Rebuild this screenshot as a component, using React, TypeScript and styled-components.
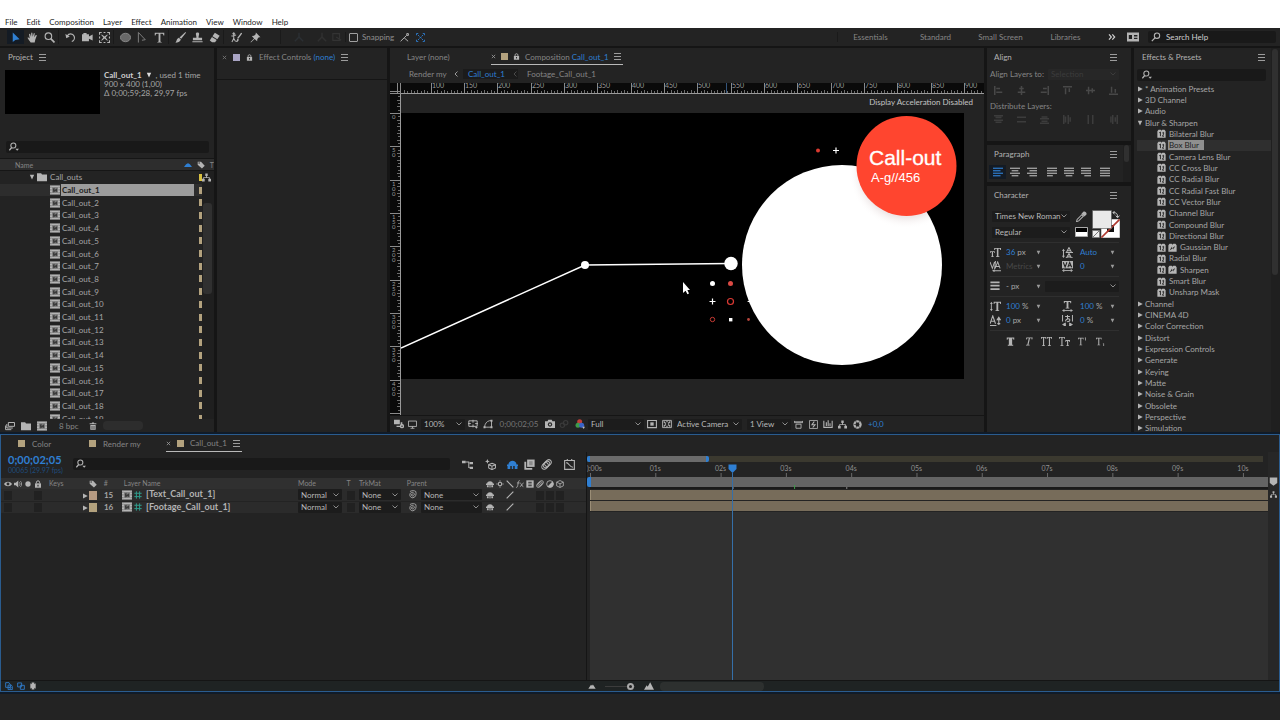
import React from "react";
import styled, { createGlobalStyle, css } from "styled-components";

const c = {
  bg: "#232323",
  well: "#191919",
  gap: "#151515",
  line: "#161616",
  head: "#2d2d2d",
  text: "#a6a6a6",
  bright: "#cfcfcf",
  dim: "#858585",
  off: "#484848",
  icon: "#b4b4b4",
  blue: "#2f7fd2",
  tan: "#b3a27e",
};

const Global = createGlobalStyle`
  * { box-sizing: border-box; }
  body { margin: 0; background: ${c.bg}; }
  body, button, input, select, table { font: 8px/10px Lato, "Noto Sans", sans-serif; color: ${c.text}; }
  button, input, select { margin: 0; padding: 0; border: 0; background: none; outline: 0; }
  ul { list-style: none; margin: 0; padding: 0; }
  h2, p { margin: 0; font: inherit; }
  a { color: inherit; text-decoration: none; }
  svg { display: block; flex: none; }
`;

/* ---------- icons, drawn on a 12 unit grid ---------- */

const glyphs: Record<string, React.ReactNode> = {
  arrow: <path d="M3 0.5V11L5.8 8.6L10.5 8Z" fill="currentColor" />,
  hand: <path d="M4 11.5C3 9.5 1 8 0.6 6.4C1.2 5.7 2.2 6.2 3 7.2L2.2 2.6C2.6 1.7 3.4 1.9 3.6 2.8L4.4 5.4L4.6 1.2C5 .4 5.8 .5 5.9 1.3L6.2 5.2L7.3 1.6C7.8 .9 8.6 1.2 8.4 2.1L7.8 5.8L9.6 3.4C10.3 3 10.9 3.5 10.5 4.3L9 8.5L8.4 11.5Z" fill="currentColor" />,
  zoom: <g fill="none" stroke="currentColor"><circle cx="4.8" cy="4.6" r="3.6" strokeWidth="1.2" /><path d="M7.4 7.3L11.4 11.4" strokeWidth="1.8" /></g>,
  rotate: <g><path d="M2.4 4.4C4 1.4 8.4 1.2 10 4.6C11 7.2 9.4 9.6 7.4 10.4" fill="none" stroke="currentColor" strokeWidth="1.3" /><path d="M0.4 2.2L1.4 6.8L5.2 4.8Z" fill="currentColor" /></g>,
  camera: <path d="M0 2.4H7.6V5L11.6 2.8V9.4L7.6 7.4V10H0ZM1.5 1H5V2.4H1.5Z" fill="currentColor" />,
  pan: <g fill="currentColor"><path d="M0 0H3V1.2H1.2V3H0ZM9 0H12V3H10.8V1.2H9ZM0 9H1.2V10.8H3V12H0ZM10.8 9H12V12H9V10.8H10.8Z" /><path d="M5 0H7V1.2H5ZM5 10.8H7V12H5ZM0 5H1.2V7H0ZM10.8 5H12V7H10.8Z" /><path d="M3 2.6L6 5L9 2.6L9.6 3.2L7.2 6L9.6 9L9 9.6L6 7.2L3 9.6L2.4 9L4.8 6L2.4 3.2Z" /></g>,
  ellipse: <ellipse cx="6" cy="6" rx="5.5" ry="4.6" fill="#686868" stroke="#8a8a8a" />,
  pen: <path d="M1.5 0.5V11.5M1.5 0.5L9 8.4L5.4 9" fill="none" stroke="#848484" strokeWidth="1" />,
  type: <path d="M0.8 0.8H11.2V3.8H10.3C10 2.4 9.6 2 8.4 2H7V9.8C7 10.6 7.4 10.8 8.4 10.9V11.5H3.6V10.9C4.6 10.8 5 10.6 5 9.8V2H3.6C2.4 2 2 2.4 1.7 3.8H0.8Z" fill="currentColor" />,
  brush: <path d="M11.4 0L12 .8L6.8 7.4L4.9 6ZM4.2 6.2L6.4 8.2C5.6 11 3 11.6 0.4 11.6C2 10.4 1.6 7 4.2 6.2Z" fill="currentColor" />,
  stamp: <path d="M4.2 2C4.2 0 7.8 0 7.8 2C7.8 3.6 7 4.6 7.2 6.4H11V9H1V6.4H4.8C5 4.6 4.2 3.6 4.2 2ZM0.4 10H11.6V11.2H0.4Z" fill="currentColor" />,
  eraser: <g fill="currentColor"><path d="M6.4 0.8L11.6 4.2L9 8L3.8 4.6Z" /><path d="M3.2 5.4L8.4 8.8L6.6 11.2H3.4L0.8 9.2Z" /></g>,
  roto: <g fill="none" stroke="currentColor"><circle cx="3" cy="1.8" r="1" fill="currentColor" /><path d="M3 3V7M0.4 4.4L5.6 3.4M3 7L1 11M3 7L5 10.4" strokeWidth="1.1" /><path d="M11.6 1.2L7.4 7" strokeWidth="1.5" /><path d="M7.2 7.2C6.4 8 6.8 9.6 5 11C7 11.2 8.6 10 8.4 8.2Z" fill="currentColor" stroke="none" /></g>,
  pin: <path d="M6.4 0.6L11.4 5.6L9.6 5.8L8 7.6L7.8 10L5 7.6L1 11.4L0.6 11L4.4 7L2 4.4L4.4 4.2L6.2 2.4Z" fill="currentColor" />,
  box: <path d="M1 2H9V10H1ZM5 6L11 10" fill="none" stroke="currentColor" strokeWidth="1.4" />,
  axis: <path d="M6 1V6L1 11M6 6L11 11" fill="none" stroke="currentColor" strokeWidth="1.8" />,
  snap: <path d="M0.8 11L5.6 6.4L10.8 11M5.6 6.4L8.8 3.2M9 0.8H11.2V3.2H9Z" fill="none" stroke="currentColor" strokeWidth="1.3" />,
  snapBox: <path d="M0.7 3V0.7H3M9 0.7H11.3V3M11.3 9V11.3H9M3 11.3H0.7V9M2.6 2.6L4.6 4.6M9.4 2.6L7.4 4.6M2.6 9.4L4.6 7.4M9.4 9.4L7.4 7.4M5 6H7" fill="none" stroke="currentColor" strokeWidth="1.2" />,
  more: <path d="M1.5 2L5 6L1.5 10M6.5 2L10 6L6.5 10" fill="none" stroke="currentColor" strokeWidth="1.8" />,
  back: <path d="M9 1L4 6L9 11" fill="none" stroke="currentColor" strokeWidth="2" />,
  workspace: <g><path d="M0 1.5H12V10.5H0Z" fill="currentColor" /><path d="M1.8 4H5V8H1.8ZM7 4H10.4V5.4H7ZM7 6.8H10.4V8H7Z" fill="#232323" /></g>,
  search: <g fill="none" stroke="currentColor"><circle cx="7.2" cy="4.4" r="3.2" strokeWidth="1.3" /><path d="M5 6.8L1 11" strokeWidth="1.5" /></g>,
  searchMenu: <g fill="none" stroke="currentColor"><circle cx="5.2" cy="4.2" r="3" strokeWidth="1.3" /><path d="M3.2 6.6L0.4 10" strokeWidth="1.5" /><path d="M7.6 8H12L9.8 10.4Z" fill="currentColor" stroke="none" /></g>,
  close: <path d="M2 2L10 10M10 2L2 10" stroke="currentColor" strokeWidth="2" />,
  lock: <g><path d="M1.5 5H10.5V11.6H1.5Z" fill="currentColor" /><path d="M3.6 5V3.2C3.6 .6 8.4 .6 8.4 3.2V5" fill="none" stroke="currentColor" strokeWidth="1.5" /><path d="M5.2 7H6.8V9.6H5.2Z" fill="#232323" /></g>,
  tri: <path d="M2 1L11.5 6L2 11Z" fill="currentColor" />,
  triDown: <path d="M1.6 1.5H10.4L6 11Z" fill="currentColor" />,
  sort: <path d="M0 9C2 7 3.6 3.4 6 3.4S10 7 12 9Z" fill="currentColor" />,
  tag: <g><path d="M1 1H6L11.6 7L7.4 11.4L1 5.6Z" fill="currentColor" /><circle cx="3.2" cy="3" r="1" fill="#232323" /></g>,
  folder: <path d="M0 1.5H5L6 3H12V11H0Z" fill="currentColor" />,
  comp: <g><path d="M0 0.5H12V11.5H0Z" fill="#b4b4b4" /><path d="M2.5 2.5H9.5V9.5H2.5Z" fill="#7d7d7d" /><path d="M3.4 4.4L5.4 3.4V6L8.6 4V8.4L6.4 7.6L4 9Z" fill="#3a3a3a" /><path d="M0.6 2H1.6V3.4H0.6ZM0.6 5H1.6V6.6H0.6ZM0.6 8.4H1.6V10H0.6ZM10.4 2H11.4V3.4H10.4ZM10.4 5H11.4V6.6H10.4ZM10.4 8.4H11.4V10H10.4Z" fill="#5a5a5a" /></g>,
  tree: <path d="M4.4 0.6H7.6V4H6.6V5.6H10.4V7.6H12V11.4H8.4V7.6H9.4V6.6H2.6V7.6H3.6V11.4H0V7.6H1.6V5.6H5.4V4H4.4Z" fill="currentColor" />,
  stack: <g fill="none" stroke="currentColor" strokeWidth="1.2"><path d="M4 1.8H11.4V6.4H4Z" /><path d="M2.2 3.6V8.4H9.4M.7 5.4V10.4H7.6" /></g>,
  trash: <path d="M1 2H4.4V0.6H7.6V2H11V3.4H1ZM2 4.4H10V11.8H2ZM4 6V10.4H5V6ZM7 6V10.4H8V6Z" fill="currentColor" fillRule="evenodd" />,
  fx: <g><path d="M0.5 11.5V3L2 1H5L6 2.4L7 1H10L11.5 3V11.5Z" fill="#b5b5b5" /><path d="M3 5L4.6 4V9.6M7 5.4L8.8 4.4V6.8L7.2 9.6H9.4" fill="none" stroke="#2a2a2a" strokeWidth="1.3" /></g>,
  fxPlay: <g><path d="M0.5 11.5V3L2 1H5L6 2.4L7 1H10L11.5 3V11.5Z" fill="#b5b5b5" /><path d="M2 10L5.4 4.6V7L9.6 4L7 9V6.6Z" fill="#2a2a2a" /></g>,
  monitor: <g fill="none" stroke="currentColor" strokeWidth="1.2"><path d="M0.6 1.4H11.4V8.6H0.6Z" /><path d="M3.4 11H8.6M6 8.6V11" /></g>,
  layersMini: <g><path d="M0 1H7V6.4H0ZM8 4V8H3V9.6H10V4Z" fill="currentColor" /><circle cx="9.6" cy="8.6" r="2.6" fill="currentColor" /><circle cx="9.6" cy="8.6" r="0.9" fill="#232323" /></g>,
  safe: <g fill="none" stroke="currentColor" strokeWidth="1.2"><path d="M1 2.2H11V8.8H1ZM6 1V4.4M6 6.6V10M0 5.5H3.4M8.6 5.5H12" /><path d="M8.4 9.6H11.8L10 11.8Z" fill="currentColor" stroke="none" /></g>,
  mask: <g fill="none" stroke="currentColor" strokeWidth="1.1"><path d="M1.8 9.8C2.4 5.6 4.2 2.8 8 2H10.2V9.8Z" /><path d="M0.6 8.6H3V11H0.6ZM9 8.6H11.4V11H9ZM9 0.8H11.4V3.2H9Z" fill="currentColor" stroke="none" /></g>,
  snapshot: <g><path d="M0 2.6H3L4 1H8L9 2.6H12V10.8H0Z" fill="currentColor" /><circle cx="6" cy="6.6" r="2.6" fill="#232323" /><circle cx="6" cy="6.6" r="1.3" fill="currentColor" /></g>,
  show: <g fill="none" stroke="currentColor" strokeWidth="1.4"><circle cx="4" cy="7.6" r="2.6" /><circle cx="8" cy="4.4" r="2.6" /></g>,
  rgb: <g><circle cx="5.6" cy="3.4" r="3" fill="#c33f38" /><circle cx="3.6" cy="7.4" r="3" fill="#3f9a4a" /><circle cx="8" cy="7.4" r="3" fill="#3a63c8" /><path d="M8.6 9.2H12L10.4 12Z" fill="#bbb" /></g>,
  roi: <g><path d="M0.7 1.7H11.3V10.3H0.7Z" fill="none" stroke="currentColor" strokeWidth="1.3" /><path d="M4 4H8V8H4Z" fill="currentColor" /></g>,
  grid: <g fill="none" stroke="currentColor" strokeWidth="1.1"><path d="M0.7 1.7H11.3V10.3H0.7Z" /><path d="M2 9L4.6 6.4M7.4 5.4L10 3M2 3L4.6 5.6M7.4 6.6L10 9M6 2V4M6 8V10" strokeWidth="1.4" /></g>,
  pixelAspect: <g fill="none" stroke="currentColor" strokeWidth="1.2"><path d="M0.4 1.2V3.6H11.6V1.2M0 2.4H12M2.6 5.6H9.4V11H2.6Z" /></g>,
  fast: <g fill="none" stroke="currentColor" strokeWidth="1.1"><path d="M0.7 0.7H11.3V11.3H0.7Z" /><path d="M7 2L4 6.4H8L5 10" strokeWidth="1.5" /></g>,
  chart: <path d="M1 2V10H11V2M4 8.4V4M6.2 8.4V1.6M8.4 8.4V5" fill="none" stroke="currentColor" strokeWidth="1.3" />,
  exposure: <g fill="none" stroke="currentColor"><circle cx="6" cy="6" r="4" strokeWidth="2.6" strokeDasharray="3.4 .8" /><circle cx="6" cy="6" r="5.2" strokeWidth=".8" /></g>,
  flow: <g fill="currentColor"><path d="M0 2H4V4.6H0ZM8.4 3.4H12V5.6H8.4ZM8.4 8.4H12V10.8H8.4Z" /><path d="M4 3.4H7.4V9.4H8.4M7 4.4H8.4" fill="none" stroke="currentColor" strokeWidth="1.1" /></g>,
  draft3d: <g fill="none" stroke="currentColor" strokeWidth="1.1"><path d="M7.6 4.6L11.4 6.2V9.8L7.6 11.6L4 9.8V6.2ZM4 6.2L7.6 7.8L11.4 6.2M7.6 7.8V11.6" /><path d="M2.6 0L3.4 1.8L5.2 2.6L3.4 3.4L2.6 5.2L1.8 3.4L0 2.6L1.8 1.8Z" fill="currentColor" stroke="none" /></g>,
  shy: <g fill="currentColor"><path d="M1.6 5.4C2 0.6 10 0.6 10.4 5.4H12V7.4H0V5.4Z" /><path d="M1.4 8H4V11H1.4ZM5.2 7.4H6.8V11.4H5.2ZM8 8H10.6V11H8Z" /></g>,
  shyOn: <g fill="currentColor"><path d="M1.6 6C2 0.6 10 0.6 10.4 6H12V7.6H0V6Z" /><path d="M0.6 7.6H3.6V10.8H0.6ZM5.2 7.6H6.8V10.8H5.2ZM8.4 7.6H11.4V10.8H8.4Z" /></g>,
  frame: <g><path d="M3.4 0.6H11.6V8.6H3.4Z" fill="currentColor" /><path d="M0.4 3H2.4V9.8H9V11.6H0.4Z" fill="currentColor" /><path d="M5.6 2.4H9.4V6.8H5.6Z" fill="#8a8a8a" /></g>,
  blur: <g fill="none" stroke="currentColor" strokeWidth="1.1"><ellipse cx="7.6" cy="4.4" rx="4" ry="2.9" transform="rotate(-45 7.6 4.4)" /><ellipse cx="6" cy="6" rx="4" ry="2.9" transform="rotate(-45 6 6)" /><ellipse cx="4.4" cy="7.6" rx="4" ry="2.9" transform="rotate(-45 4.4 7.6)" /></g>,
  graph: <g fill="none" stroke="currentColor" strokeWidth="1.2"><path d="M0.7 1.7H11.3V11.3H0.7Z" /><path d="M2.4 4C5.4 4 6 9 9.8 9M3.6 0V2M8.4 0V2" /></g>,
  eye: <g><path d="M0 6C3 1.6 9 1.6 12 6C9 10.4 3 10.4 0 6Z" fill="currentColor" /><circle cx="6" cy="6" r="2.2" fill="#2d2d2d" /></g>,
  audio: <g><path d="M0 4H2.6L6.4 0.8V11.2L2.6 8H0Z" fill="currentColor" /><path d="M8 3.4C9.4 5 9.4 7 8 8.6M9.6 1.6C12 4 12 8 9.6 10.4" fill="none" stroke="currentColor" strokeWidth="1.1" /></g>,
  solo: <circle cx="6" cy="6" r="4" fill="currentColor" />,
  sun: <g><circle cx="6" cy="6" r="2.6" fill="none" stroke="currentColor" strokeWidth="1.6" /><path d="M6 .6V2.4M6 9.6V11.4M.6 6H2.4M9.6 6H11.4" stroke="currentColor" strokeWidth="1.4" /></g>,
  quality: <path d="M1 1L11 11" stroke="currentColor" strokeWidth="1.8" />,
  best: <path d="M1 11L11 1" stroke="currentColor" strokeWidth="1.8" />,
  film: <g><path d="M0.5 0.5H11.5V11.5H0.5Z" fill="currentColor" /><path d="M3.4 2.6H8.6V5.4H3.4ZM3.4 6.8H8.6V9.4H3.4Z" fill="#4a4a4a" /></g>,
  adjust: <g><circle cx="6" cy="6" r="5" fill="none" stroke="currentColor" strokeWidth="1.3" /><path d="M9.6 2.4A5 5 0 0 1 2.4 9.6Z" fill="currentColor" /></g>,
  cube: <path d="M6 0.8L11 3.2V8.8L6 11.2L1 8.8V3.2ZM1 3.2L6 5.8L11 3.2M6 5.8V11.2" fill="none" stroke="currentColor" strokeWidth="1.2" />,
  fxItalic: <path d="M5.6 1C3.4 .6 3.6 3 3 6S2.4 11.6 0.2 11M1.4 4.4H5.4M6.4 4.4C8 4.4 8.4 10 11 10M11.4 4.4C9.4 4.4 8 10 5.8 10" fill="none" stroke="currentColor" strokeWidth="1.2" />,
  whip: <path d="M6.2 6C6.8 5 5 4.4 4.4 6C4 8 7 8.8 8.2 6.8C9.4 4 5.6 2 3.4 4C1.2 6.4 2.8 10.4 6.4 10.4C10 10.2 11.6 5.6 10.4 2M10.4 2C8.6 .6 5 .4 2.6 2" fill="none" stroke="currentColor" strokeWidth="1.1" />,
  hash: <g stroke="#2f9a8a" strokeWidth="1.5"><path d="M3.6 0.5V11.5M8.4 0.5V11.5M0.5 3.4H11.5M0.5 8.4H11.5" /></g>,
  mount: <path d="M0.5 10L4.5 4L6 5.6L7.4 3.6L11.5 10Z" fill="currentColor" />,
  mountBig: <path d="M0 10.5L3.2 5L4.4 6.8L7.4 1.6L12 10.5Z" fill="currentColor" />,
  toggleA: <g fill="none" stroke="currentColor" strokeWidth="1.3"><path d="M1 1H6L8 4V8H1Z" /><path d="M4.6 4.6H9.6L11 7V11.4H4.6Z" /><circle cx="8" cy="8.4" r="1.2" /></g>,
  toggleB: <g fill="none" stroke="currentColor" strokeWidth="1.3"><path d="M1 1.4H7V7.4H1Z" /><path d="M5 5H11V11H5Z" /></g>,
  toggleC: <path d="M4 0.6H8V3.4L10 2V10L8 8.6V11.4H4V8.6L2 10V2L4 3.4Z" fill="currentColor" />,
  dropper: <g fill="currentColor"><path d="M8 0.8C9.8 -.4 12.4 2 11.2 4L9 6L6 3Z" /><path d="M6.4 4L8 5.6L3 10.8L0.6 11.6L1.2 9.2Z" fill="none" stroke="currentColor" strokeWidth="1.1" /></g>,
  tSize: <g fill="currentColor"><path d="M4.6 1H12V3.4H11.2L10.8 2H9.2V10H10.2V11H6.6V10H7.5V2H5.9L5.4 3.4H4.6Z" /><path d="M0 4.6H5.2V6.6H4.6L4.3 5.5H3.3V10.2H4V11H1.4V10.2H2V5.5H.9L.6 6.6H0Z" /></g>,
  leading: <g fill="none" stroke="currentColor" strokeWidth="1.1"><path d="M5 5.4L7.6 .6L10.2 5.4M6 4H9.4M4 6H12M5 11.6L7.6 7L10.2 11.6M6 10.2H9.4M4 12H12M1.6 3V11" /><path d="M0 4.4L1.6 2L3.2 4.4ZM0 9.6L1.6 12L3.2 9.6Z" fill="currentColor" stroke="none" /></g>,
  kern: <g fill="none" stroke="currentColor" strokeWidth="1.1"><path d="M0 1L2.6 8L5 1M5.6 8L8.4 1L11 8M6.6 6H10M6 0L5 9M3 10.6H12" /><path d="M5 9L2.4 10.6L5 12Z" fill="currentColor" stroke="none" /></g>,
  track: <g><path d="M0 0H12V8H0Z" fill="currentColor" /><path d="M1.4 1.4L3.4 6.6L5.4 1.4M6.4 6.8L8.4 1.6L10.6 6.8M7.4 5.2H9.6" fill="none" stroke="#232323" strokeWidth="1.1" /><path d="M1 10.4H11M2.6 9L0.6 10.4L2.6 11.8M9.4 9L11.4 10.4L9.4 11.8" fill="none" stroke="currentColor" /></g>,
  strokeW: <path d="M0.5 1.6H11.5M0.5 5.6H11.5M0.5 9.8H11.5" stroke="currentColor" strokeWidth="2" />,
  vScale: <g fill="currentColor"><path d="M4 0.8H12V3.4H11.2L10.8 2H9V10H10V11H6V10H7V2H5.2L4.8 3.4H4Z" /><path d="M1.5 2.4V9.6" stroke="currentColor" /><path d="M0 3.4L1.5 .8L3 3.4ZM0 8.6L1.5 11.2L3 8.6Z" /></g>,
  hScale: <g fill="currentColor"><path d="M2 0H10V2.4H9.2L8.8 1.2H7V7.4H8V8.2H4V7.4H5V1.2H3.2L2.8 2.4H2Z" /><path d="M1.4 10.4H10.6" stroke="currentColor" /><path d="M2.6 8.8L0 10.4L2.6 12ZM9.4 8.8L12 10.4L9.4 12Z" /></g>,
  shift: <g fill="none" stroke="currentColor" strokeWidth="1.2"><path d="M0 9.6L3 1L6 9.6M1.2 6.8H5M0 11.4H7M9.6 4V11" /><path d="M8 5L9.6 2.4L11.2 5ZM8 9.4H11.2" fill="currentColor" /></g>,
  tsume: <g fill="none" stroke="currentColor" strokeWidth="1.1"><path d="M0.6 0V7M11.4 0V7M3.4 1.6H8.6M6 0V4M4 7C3.4 4.4 8.6 3 8.6 5.6C8.4 7.4 6 7.4 5.4 7" /><path d="M3.6 9L1 10.4L3.6 12ZM8.4 9L11 10.4L8.4 12Z" fill="currentColor" /></g>,
  bold: <path d="M1 0.5H11V3.6H10L9.4 2H8.2V10.2H9.6V11.5H2.4V10.2H3.8V2H2.6L2 3.6H1Z" fill="currentColor" />,
  italic: <path d="M3.2 0.5H11.6L11 3.4H10.2L10 1.6H8L6 10.4H7.6L7.4 11.4H2.6L2.8 10.4H4.4L6.4 1.6H4.4L3.4 3.4H2.6Z" fill="currentColor" />,
  caps: <path d="M0 1H5.6V3.4H5L4.6 2H3.4V10.2H4.4V11H1.2V10.2H2.2V2H1L.6 3.4H0ZM6.4 1H12V3.4H11.4L11 2H9.8V10.2H10.8V11H7.6V10.2H8.6V2H7.4L7 3.4H6.4Z" fill="currentColor" />,
  smallCaps: <path d="M0 1H6.4V3.4H5.8L5.4 2H3.8V10.2H4.8V11H1.6V10.2H2.6V2H1L.6 3.4H0ZM7 4.4H12V6.6H11.4L11 5.4H10V10.2H10.8V11H8V10.2H8.8V5.4H8L7.6 6.6H7Z" fill="currentColor" />,
  superT: <path d="M0 1H7.4V3.4H6.8L6.4 2H4.4V10.2H5.6V11H1.8V10.2H3V2H1L.6 3.4H0ZM9 1L10.4 .4V4.6H9.4V1.6H9Z" fill="currentColor" />,
  subT: <path d="M0 1H7.4V3.4H6.8L6.4 2H4.4V10.2H5.6V11H1.8V10.2H3V2H1L.6 3.4H0ZM9.4 8.6H10.8V12H9.8V9.4H9Z" fill="currentColor" />,
  marker: <path d="M1 0.5H11V8L6 11.5L1 8Z" fill="currentColor" />,
};

const alignBars: Record<string, string> = {
  alignL: "M1 0V12M3 3.4H8M3 8.4H11",
  alignC: "M6 0V12M3 3.4H9M1 8.4H11",
  alignR: "M11 0V12M4 3.4H9M1 8.4H9",
  alignT: "M0 1H12M3.4 3V11M8.4 3V8",
  alignM: "M0 6H12M3.4 1V11M8.4 3V9",
  alignB: "M0 11H12M3.4 1V9M8.4 4V9",
  distT: "M0 1H12M2 3.4H10M0 7H12M2 9.6H10",
  distM: "M0 3H3M9 3H12M3 3H9M0 9H3M9 9H12M3 9H9",
  distB: "M2 2.6H10M0 5H12M2 8.4H10M0 11H12",
  distL: "M1 0V12M3.4 2V10M7 0V12M9.6 3V9",
  distC: "M3 0V12M9 0V12M3 3V9M9 3V9",
  distR: "M2.6 2V10M5 0V12M8.4 3V9M11 0V12",
};

const paraLines: Record<string, [number, number][]> = {
  pLeft: [[0, 12], [0, 9], [0, 12], [0, 9]],
  pCenter: [[0, 12], [2, 10], [0, 12], [2, 10]],
  pRight: [[0, 12], [3, 12], [0, 12], [3, 12]],
  pJustL: [[0, 12], [0, 12], [0, 12], [0, 7]],
  pJustC: [[0, 12], [0, 12], [0, 12], [2, 10]],
  pJustR: [[0, 12], [0, 12], [0, 12], [4, 12]],
  pJust: [[0, 12], [0, 12], [0, 12], [0, 12]],
};

function Icon({ name, size = 10, color = c.icon }: { name: string; size?: number; color?: string }) {
  let body = glyphs[name];
  if (alignBars[name]) body = <path d={alignBars[name]} stroke="currentColor" strokeWidth="2" />;
  if (paraLines[name])
    body = paraLines[name].map(([a, b], i) => (
      <path key={i} d={`M${a} ${1.5 + i * 3}H${b}`} stroke="currentColor" strokeWidth="1.4" />
    ));
  return (
    <svg width={size} height={size} viewBox="0 0 12 12" color={color} aria-hidden="true">
      {body}
    </svg>
  );
}

function MenuIcon() {
  return (
    <svg width="7" height="7" viewBox="0 0 7 7" aria-hidden="true">
      <path d="M0 0.5H7M0 3.5H7M0 6.5H7" stroke="#9c9c9c" />
    </svg>
  );
}

/* ---------- shared parts ---------- */

const Screen = styled.div`
  min-height: 100vh;
  display: flex;
  flex-direction: column;
  padding-bottom: 28px;
  background: ${c.bg};
  overflow: hidden;
`;

const IconButton = styled.button<{ $w?: number; $on?: boolean }>`
  width: ${(p) => p.$w ?? 17}px;
  height: 14px;
  flex: none;
  display: flex;
  align-items: center;
  justify-content: center;
  background: ${(p) => (p.$on ? "#141b24" : "none")};
`;

const Panel = styled.section`
  background: ${c.bg};
  display: flex;
  flex-direction: column;
  min-width: 0;
  min-height: 0;
  overflow: hidden;
`;

const PanelHead = styled.header<{ $pad?: number }>`
  height: 18px;
  flex: none;
  display: flex;
  align-items: center;
  gap: 6px;
  padding: 0 ${(p) => p.$pad ?? 8}px;
  color: ${(p) => (p.$pad ? c.dim : "#b2b2b2")};
`;

const Blue = styled.span`
  color: ${c.blue};
`;

const Swatch = styled.i<{ $c?: string }>`
  width: 7px;
  height: 7px;
  flex: none;
  background: ${(p) => p.$c ?? c.tan};
`;

const SearchBox = styled.label`
  height: 12px;
  flex: none;
  display: flex;
  align-items: center;
  gap: 5px;
  padding: 0 3px;
  background: ${c.well};
  border-radius: 2px;
  input { flex: 1; min-width: 0; height: 12px; }
  input::placeholder { color: ${c.bright}; opacity: 1; }
`;

const SelectWrap = styled.label<{ $w?: number; $dim?: boolean }>`
  display: grid;
  align-items: center;
  width: ${(p) => (p.$w ? p.$w + "px" : "100%")};
  height: 11px;
  flex: none;
  background: ${(p) => (p.$dim ? "#272727" : "#1c1c1c")};
  border-radius: 1px;
  > * { grid-area: 1 / 1; }
  svg { justify-self: end; margin-right: 3px; pointer-events: none; }
  select { appearance: none; width: 100%; height: 11px; padding: 0 3px; color: ${(p) => (p.$dim ? "#3c3c3c" : "#b8b8b8")}; }
`;

function Select({ label, value, w, dim }: { label: string; value: string; w?: number; dim?: boolean }) {
  return (
    <SelectWrap $w={w} $dim={dim}>
      <select aria-label={label} defaultValue={value}>
        <option>{value}</option>
      </select>
      <svg width="6" height="4" viewBox="0 0 6 4" aria-hidden="true">
        <path d="M0.5 0.5L3 3L5.5 0.5" fill="none" stroke={dim ? "#3c3c3c" : "#8c8c8c"} />
      </svg>
    </SelectWrap>
  );
}

/* ---------- menu bar and tool bar ---------- */

const MenuBar = styled.nav`
  height: 28px;
  padding: 17px 0 0 5px;
  display: flex;
  gap: 9px;
  background: #fff;
  color: #1e1e1e;
`;

const ToolBar = styled.div`
  height: 20px;
  display: flex;
  align-items: center;
  padding: 0 4px 0 7px;
  border-bottom: 2px solid ${c.gap};
`;

const ToolGroup = styled.div<{ $ml?: number }>`
  display: flex;
  align-items: center;
  margin-left: ${(p) => p.$ml ?? 0}px;
  & + & { padding-left: 3px; border-left: 1px solid #1a1a1a; }
`;

const Snap = styled.label`
  display: flex;
  align-items: center;
  gap: 4px;
  margin-right: 2px;
  padding-left: 3px;
  border-left: 1px solid #1a1a1a;
  color: #8e8e8e;
  input { appearance: none; width: 9px; height: 9px; border: 1px solid #a0a0a0; border-radius: 1px; }
`;

const Workspaces = styled.div`
  display: flex;
  align-items: center;
  margin-left: auto;
  border-left: 1px solid #1a1a1a;
  button { width: 65px; color: ${c.dim}; }
`;

const HelpSearch = styled(SearchBox)`
  width: 128px;
  margin-left: 8px;
`;

/* ---------- work area ---------- */

const Work = styled.main`
  height: calc(60vh - 48px);
  display: grid;
  grid-template-columns: 214px 170px minmax(0, 1fr) 144px 146px;
  grid-template-rows: minmax(0, 1fr);
  gap: 3px;
  background: ${c.gap};
`;

const Info = styled.div`
  display: flex;
  gap: 4px;
  padding: 4px 5px 27px;
  p { display: flex; align-items: center; gap: 4px; height: 9px; white-space: nowrap; }
  b { color: ${c.bright}; }
`;

const Thumb = styled.div`
  width: 95px;
  height: 44px;
  flex: none;
  background: #000;
`;

const ProjectSearch = styled(SearchBox)`
  margin: 0 5px 5px 6px;
`;

const ListHead = styled.div`
  height: 13px;
  flex: none;
  display: flex;
  align-items: center;
  padding-left: 15px;
  background: ${c.head};
  border: solid ${c.line};
  border-width: 1px 0;
  font-size: 7px;
  color: ${c.dim};
  svg { margin-right: 5px; }
  span { flex: 1; }
`;

const FileArea = styled.div`
  flex: 1;
  min-height: 0;
  display: flex;
  overflow: hidden;
`;

const FileList = styled.ul`
  flex: 1;
  height: 254px;
  display: grid;
  grid-auto-rows: 1fr;
`;

const FileRow = styled.li<{ $on?: boolean; $folder?: boolean }>`
  display: flex;
  align-items: center;
  padding-left: ${(p) => (p.$folder ? 29 : 50)}px;
  background: ${(p) => (p.$on ? "#2d2d2d" : "none")};
  span {
    flex: 1;
    margin: 0 5px 0 ${(p) => (p.$folder ? 3 : 1)}px;
    padding-left: ${(p) => (p.$folder ? 0 : 1)}px;
    ${(p) => p.$on && css`background: #9c9c9c; color: #1c1c1c; font-weight: 700; line-height: 12px;`}
  }
`;

const Tick = styled.i<{ $c?: string }>`
  width: 3px;
  height: 7px;
  background: ${(p) => p.$c ?? c.tan};
`;

const ScrollTrack = styled.div<{ $w: number; $top: number; $h: number }>`
  width: ${(p) => p.$w}px;
  flex: none;
  padding: 0 2px 0 1px;
  background: #1f1f1f;
  svg { margin: 2px 0 0 -1px; }
  &::after { content: ""; display: block; margin-top: ${(p) => p.$top}px; height: ${(p) => p.$h}px; background: #303030; border-radius: 3px; }
`;

const FootBar = styled.footer`
  flex: none;
  height: 13px;
  display: flex;
  align-items: center;
  gap: 6px;
  padding: 0 5px;
  span { padding: 0 5px 0 6px; color: ${c.dim}; }
  i { width: 40px; height: 9px; border-radius: 4px; background: #2d2d2d; }
`;

const SubBar = styled.div`
  height: 14px;
  border-bottom: 1px solid ${c.gap};
`;

const CompTabs = styled.div`
  height: 18px;
  flex: none;
  display: flex;
  align-items: center;
  padding-left: 17px;
  > button { width: 84px; text-align: left; color: ${c.dim}; }
`;

const ActiveTab = styled.div<{ $gap: number }>`
  height: 16px;
  display: flex;
  align-items: center;
  gap: ${(p) => p.$gap}px;
  padding-right: 2px;
  border-bottom: 1px solid #b9b9b9;
  color: ${c.dim};
`;

const Crumbs = styled.nav`
  height: 17px;
  flex: none;
  display: flex;
  align-items: center;
  padding: 0 0 1px 19px;
  color: ${c.dim};
  > a:first-child { width: 44px; }
`;

const Current = styled.div`
  width: 55px;
  display: flex;
  align-items: center;
  justify-content: space-between;
  margin: 0 9px 0 4px;
  padding-left: 5px;
  background: #1b1b1b;
`;

const Viewer = styled.div`
  flex: 1;
  min-height: 0;
  display: grid;
  grid-template: 11px minmax(0, 1fr) / 11px minmax(0, 1fr);
  background: ${c.bg};
  overflow: hidden;
  > svg { background: #0a0a0a; }
`;

const Stage = styled.div`
  min-width: 0;
  overflow: hidden;
  p { height: 19px; line-height: 17px; padding-right: 11px; text-align: right; color: #c4c4c4; }
`;

const CompFoot = styled.footer`
  flex: none;
  height: 17px;
  display: flex;
  align-items: center;
  padding-left: 3px;
  border-top: 1px solid ${c.gap};
  color: ${c.text};
`;

const Code = styled.button`
  width: 46px;
  color: #777;
`;

const Spacer = styled.span<{ $w: number }>`
  width: ${(p) => p.$w}px;
  flex: none;
`;

/* ---------- side panels ---------- */

const Side = styled.div`
  display: flex;
  flex-direction: column;
  gap: 4px;
  min-height: 0;
`;

const Body = styled.div`
  padding: 0 12px 0 3px;
`;

const AlignLine = styled.div`
  height: 16px;
  display: flex;
  align-items: center;
  justify-content: space-between;
  color: ${c.dim};
`;

const IconRow = styled.div<{ $h: number }>`
  height: ${(p) => p.$h}px;
  margin-right: -3px;
  display: flex;
  align-items: center;
  justify-content: space-between;
`;

const WithScroll = styled.div`
  display: flex;
  flex: 1;
  min-height: 0;
  > div:first-child { flex: 1; min-width: 0; }
`;

const ParaRow = styled.div`
  display: flex;
  align-items: center;
  padding: 2px 0 0 2px;
  span { width: 3px; }
`;

const FontGrid = styled.div`
  display: grid;
  grid-template-columns: 78px 22px 28px;
  align-items: center;
  padding: 6px 0 4px 2px;
`;

const Stack = styled.div`
  display: grid;
  justify-items: center;
  gap: 5px;
`;

const CharRows = styled.div`
  border-top: 1px solid #2f2f2f;
  padding: 2px 0 3px;
`;

const CharRow = styled.div`
  height: 14px;
  display: grid;
  grid-template-columns: 16px 30px 26px 18px 30px 1fr;
  align-items: center;
`;

const OrderCell = styled.div`
  grid-column: 4 / 7;
  justify-self: end;
  margin-left: -17px;
`;

const Off = styled.span`
  color: ${c.off};
`;

const StyleRow = styled.div`
  height: 22px;
  border-top: 1px solid #2f2f2f;
  display: flex;
  align-items: center;
  padding-left: 11px;
`;

const FxList = styled.ul`
  flex: none;
  height: 351px;
  display: grid;
  grid-auto-rows: 1fr;
  padding-left: 3px;
`;

const FxRow = styled.li<{ $child?: boolean; $on?: boolean }>`
  display: flex;
  align-items: center;
  gap: ${(p) => (p.$child ? 2 : 1)}px;
  padding-left: ${(p) => (p.$child ? 20 : 0)}px;
  background: ${(p) => (p.$on ? "#2f2f2f" : "none")};
  white-space: nowrap;
  span { padding: 0 1px; ${(p) => p.$on && css`background: #8f8f8f; color: #1e1e1e; padding-right: 5px;`} }
`;

/* ---------- timeline ---------- */

const Timeline = styled.section`
  flex: 1;
  margin-top: 2px;
  display: flex;
  flex-direction: column;
  border: 1px solid #2a5c8f;
  outline: 2px solid #101b28;
`;

const TimeTabs = styled.div`
  height: 17px;
  flex: none;
  display: flex;
  align-items: center;
  padding-left: 17px;
  button { display: flex; align-items: center; gap: 7px; height: 16px; width: 71px; color: ${c.dim}; }
  button + button { width: 77px; }
`;

const TimeBody = styled.div`
  flex: 1;
  display: grid;
  grid-template-columns: 585px minmax(0, 1fr);
`;

const Controls = styled.div`
  height: 26px;
  display: flex;
  align-items: center;
  padding: 0 0 2px 7px;
`;

const Clock = styled.div`
  width: 65px;
  flex: none;
  b { display: block; font-size: 11px; line-height: 12px; color: ${c.blue}; }
  small { display: block; font-size: 7px; line-height: 9px; color: #1f4c7c; }
`;

const TimeSearch = styled(SearchBox)`
  width: 377px;
  margin-right: 8px;
`;

const LayerTable = styled.table`
  width: 100%;
  table-layout: fixed;
  border-collapse: collapse;
  th, td { height: 12px; padding: 0; text-align: left; font-weight: 400; white-space: nowrap; background: #2b2b2b; }
  th { height: 11px; font-size: 7px; line-height: 9px; color: ${c.dim}; background: #303030; }
  th:first-child, td:first-child { padding-left: 3px; }
  td { border-bottom: 1px solid ${c.bg}; }
  svg { display: inline-block; vertical-align: middle; }
`;

const Cell = styled.i<{ $c?: string }>`
  display: inline-block;
  vertical-align: middle;
  width: 8px;
  height: 9px;
  margin-right: 2px;
  background: ${(p) => p.$c ?? "#212121"};
`;

const LayerName = styled.b`
  font-size: 9px;
  margin-left: 4px;
  color: #b4b4b4;
`;

const ParentCell = styled.div`
  display: flex;
  align-items: center;
  gap: 4px;
  padding-left: 3px;
`;

const SwitchHead = styled.div`
  display: flex;
  align-items: center;
  gap: 2px;
  padding-left: 1px;
`;

const SwitchCell = styled.div`
  display: flex;
  align-items: center;
  gap: 12px;
  padding-left: 1px;
  div { padding-left: 10px; }
`;

const Tracks = styled.div`
  position: relative;
  display: grid;
  grid-template-columns: minmax(0, 1fr) 11px;
  border-left: 1px solid ${c.gap};
`;

const TrackMain = styled.div`
  display: flex;
  flex-direction: column;
  padding-left: 3px;
`;

const Gutter = styled.div`
  display: flex;
  flex-direction: column;
  align-items: center;
  gap: 5px;
  padding-top: 25px;
  background: #272727;
`;

const NavBar = styled.div`
  height: 6px;
  margin: 4px 5px 0 -3px;
  display: flex;
  background: #3b392f;
  i { width: 18%; background: #6b6b6b; border: solid ${c.blue}; border-width: 0 3px; border-radius: 2px; }
`;

const WorkArea = styled.div`
  height: 10px;
  margin-left: -3px;
  background: #646464;
  border-left: 4px solid ${c.blue};
  border-radius: 2px 0 0 2px;
`;

const LayerBar = styled.div`
  height: 10px;
  margin-top: 1px;
  background: #776c5a;
  border-left: 1px solid #9a8d76;
`;

const Empty = styled.div`
  flex: 1;
  margin-top: 1px;
  background: #303030;
`;

const Playhead = styled.div`
  position: absolute;
  inset: 12px auto 0 calc(21% - 4px);
  width: 9px;
  &::after { content: ""; display: block; width: 1px; height: calc(100% - 9px); margin-left: 4px; background: #356fa8; }
`;

const TimeFoot = styled.footer`
  height: 11px;
  flex: none;
  display: flex;
  align-items: center;
  gap: 3px;
  padding-left: 3px;
  background: #1f2323;
  border-top: 1px solid ${c.gap};
`;

const Zoomer = styled.div`
  margin-left: 548px;
  display: flex;
  align-items: center;
  gap: 8px;
  i { width: 104px; height: 9px; margin-left: -2px; border-radius: 4px; background: #2d302f; }
  input {
    appearance: none; width: 30px; height: 9px; margin: 0 1px;
    background: linear-gradient(#3c3c3c, #3c3c3c) center / 100% 1px no-repeat;
  }
  input::-webkit-slider-thumb { appearance: none; width: 7px; height: 7px; border: 2px solid #a8a8a8; border-radius: 50%; background: #222; }
`;

/* ---------- drawings ---------- */

function TopRuler() {
  const ticks = [];
  for (let v = 60; v <= 930; v += 5) ticks.push(v);
  return (
    <svg width="100%" height="11" fontFamily="Lato, sans-serif" fontSize="7" fill="#9a9a9a">
      {ticks.map((v) => {
        const px = Math.round(563 - ((900 - v) * 2) / 3);
        return v % 50 === 0 ? (
          <g key={v}>
            <rect x={px} y="0" width="1" height="10" fill="#8a8a8a" />
            <text x={px + 1} y="5">{v}</text>
          </g>
        ) : (
          <rect key={v} x={px} y={v % 10 ? 8 : 7} width="1" height={v % 10 ? 2 : 3} fill="#6c6c6c" />
        );
      })}
      <rect x="325" y="0" width="1" height="10" fill="#34557c" />
      <rect x="0" y="10" width="100%" height="1" fill="#9a9a9a" />
    </svg>
  );
}

function SideRuler() {
  const ticks = [];
  for (let v = -25; v <= 450; v += 5) ticks.push(v);
  return (
    <svg width="11" height="100%" fontFamily="Lato, sans-serif" fontSize="6" fill="#9a9a9a">
      {ticks.map((v) => {
        const y = Math.round(19 + (v * 2) / 3);
        return v % 50 === 0 ? (
          <g key={v}>
            <rect x="0" y={y} width="10" height="1" fill="#8a8a8a" />
            {v < 450 && String(v).split("").map((d, k) => (
              <text key={k} x="2" y={y + 6 + k * 5}>{d}</text>
            ))}
          </g>
        ) : (
          <rect key={v} x={v % 10 ? 8 : 7} y={y} width={v % 10 ? 2 : 3} height="1" fill="#6c6c6c" />
        );
      })}
      <rect x="10" y="0" width="1" height="100%" fill="#9a9a9a" />
    </svg>
  );
}

function Artwork() {
  return (
    <svg width="563" height="266" viewBox="0 0 563 266" fontFamily='"Liberation Sans", Arial, sans-serif'>
      <defs>
        <radialGradient id="shade">
          <stop offset="0.8" stopColor="#d8c8c8" />
          <stop offset="1" stopColor="#fff" stopOpacity="0" />
        </radialGradient>
        <clipPath id="disc"><circle cx="441" cy="152" r="100" /></clipPath>
      </defs>
      <rect width="563" height="266" fill="#000" />
      <path d="M0 235L184 152L330 150.5" fill="none" stroke="#fff" strokeWidth="1.5" />
      <circle cx="184" cy="152" r="4" fill="#fff" />
      <circle cx="330" cy="150.5" r="6.7" fill="#fff" />
      <circle cx="311.5" cy="170.5" r="2.5" fill="#fff" />
      <circle cx="329.5" cy="170.5" r="2.5" fill="#dc4a44" />
      <path d="M308.5 188.5H314.5M311.5 185.5V191.5" stroke="#fff" strokeWidth="1.2" />
      <circle cx="329.5" cy="188.5" r="3" fill="none" stroke="#dc3a34" strokeWidth="1.2" />
      <circle cx="311.5" cy="206.5" r="2.2" fill="none" stroke="#c43a34" />
      <path d="M328 205H331.4V208.4H328Z" fill="#fff" />
      <circle cx="347.5" cy="206.5" r="1.4" fill="#b8453c" />
      <path d="M346.6 188.5H350" stroke="#fff" />
      <circle cx="417" cy="37.5" r="2" fill="#dc3a30" />
      <path d="M432 37.5H438M435 34.5V40.5" stroke="#fff" strokeWidth="1.2" />
      <circle cx="441" cy="152" r="100" fill="#fff" />
      <circle cx="505.5" cy="58" r="58" fill="url(#shade)" clipPath="url(#disc)" opacity="0.4" />
      <circle cx="505.5" cy="53" r="50" fill="#ff452f" />
      <text x="468" y="52" fontSize="21" fill="#fff" stroke="#fff" strokeWidth="0.3">Call-out</text>
      <text x="470" y="69" fontSize="13" fill="#fff">A-g//456</text>
      <path d="M282 169V180L284.6 177.8L286.4 181.2L288 180.4L286.4 177H289Z" fill="#fff" />
    </svg>
  );
}

function TimeScale() {
  return (
    <svg width="100%" height="15" fontFamily="Lato, sans-serif" fontSize="7" fill="#909090" overflow="visible">
      {Array.from({ length: 11 }, (_, i) => (
        <g key={i}>
          {i === 0 ? (
            <text x="-3" y="9">):00s</text>
          ) : (
            <text x={`${i * 9.63}%`} y="9" textAnchor="middle">{`${String(i).padStart(2, "0")}s`}</text>
          )}
          <rect x={`${i * 9.63}%`} y="11" width="1" height="4" fill="#6a6a6a" />
        </g>
      ))}
    </svg>
  );
}

function CacheMarks() {
  return (
    <svg width="100%" height="2" overflow="visible">
      <rect width="100%" height="2" fill="#1a1a1a" />
      <rect x="30.1%" y="-2" width="1" height="4" fill="#3f9a4a" />
      <rect x="21%" y="0" width="1" height="2" fill="#c8c8c8" />
      <rect x="37.8%" y="0" width="1" height="2" fill="#8a8a8a" />
    </svg>
  );
}

function ColorChips() {
  return (
    <svg width="28" height="28" viewBox="0 0 28 28">
      <path d="M9 9H28V28H9Z" fill="#fff" stroke="#555" strokeWidth=".6" />
      <path d="M15 15H22V22H15Z" fill="#111" />
      <path d="M9.4 27.6L27.6 9.4" stroke="#b03a30" strokeWidth="1.6" />
      <path d="M20 0H28V9H20Z" fill="#232323" />
      <path d="M0.5 0.5H19.5V18.5H0.5Z" fill="#e9e9e9" stroke="#555" strokeWidth=".6" />
      <path d="M21 2.6C24 2.4 25.6 3.4 25.6 7M23.8 5.6L25.6 7.8L27.4 5.6M22.6 1L21 2.6L22.6 4.4" fill="none" stroke="#c8c8c8" />
      <path d="M0.5 20.5H7.5V27.5H0.5Z" fill="#eee" stroke="#777" strokeWidth=".6" />
      <path d="M1 27L7 21" stroke="#777" />
    </svg>
  );
}

/* ---------- sections ---------- */

const tools = [
  ["arrow", "hand", "zoom"],
  ["rotate", "camera", "pan"],
  ["ellipse", "pen", "type"],
  ["brush", "stamp", "eraser"],
];

function Tools() {
  return (
    <ToolBar>
      {tools.map((g) => (
        <ToolGroup key={g[0]}>
          {g.map((n) => (
            <IconButton key={n} aria-label={n} $on={n === "arrow"}>
              <Icon name={n} size={11} color={n === "arrow" ? c.blue : c.icon} />
            </IconButton>
          ))}
        </ToolGroup>
      ))}
      <ToolGroup>
        {["roto", "pin"].map((n) => (
          <IconButton key={n} aria-label={n} $w={19}><Icon name={n} size={11} /></IconButton>
        ))}
      </ToolGroup>
      <ToolGroup $ml={15}>
        <IconButton aria-label="local axis" $w={30}><Icon name="axis" color="#2b2f33" /></IconButton>
        <IconButton aria-label="world axis" $w={15}><Icon name="axis" color="#303030" /></IconButton>
        <IconButton aria-label="view axis" $w={16}><Icon name="box" color="#333" /></IconButton>
      </ToolGroup>
      <Snap><input type="checkbox" />Snapping</Snap>
      <IconButton aria-label="snap edges" $w={16}><Icon name="snap" size={9} /></IconButton>
      <IconButton aria-label="snap features" $w={16}><Icon name="snapBox" size={9} color={c.blue} /></IconButton>
      <Workspaces>
        {["Essentials", "Standard", "Small Screen", "Libraries"].map((t) => <button key={t}>{t}</button>)}
      </Workspaces>
      <IconButton aria-label="more workspaces" $w={28}><Icon name="more" size={8} color={c.bright} /></IconButton>
      <IconButton aria-label="workspace layout" $w={14}><Icon name="workspace" size={12} /></IconButton>
      <HelpSearch>
        <Icon name="search" />
        <input aria-label="Search Help" placeholder="Search Help" />
      </HelpSearch>
    </ToolBar>
  );
}

function Project() {
  return (
    <Panel>
      <PanelHead><h2>Project</h2><MenuIcon /></PanelHead>
      <Info>
        <Thumb />
        <div>
          <p><b>Call_out_1</b><Icon name="triDown" size={6} color="#ddd" /><span>, used 1 time</span></p>
          <p>900 x 400 (1,00)</p>
          <p>Δ 0;00;59;28, 29,97 fps</p>
        </div>
      </Info>
      <ProjectSearch>
        <Icon name="searchMenu" />
        <input aria-label="Search project" />
      </ProjectSearch>
      <ListHead>
        <span>Name</span>
        <Icon name="sort" size={8} color={c.blue} />
        <Icon name="tag" size={8} />
        T
      </ListHead>
      <FileArea>
        <FileList>
          <FileRow $folder>
            <Icon name="triDown" size={6} />&nbsp;<Icon name="folder" size={10} />
            <span>Call_outs</span><Tick $c="#d8c040" />
          </FileRow>
          {Array.from({ length: 19 }, (_, i) => (
            <FileRow key={i} $on={i === 0}>
              <Icon name="comp" size={10} />
              <span>Call_out_{i + 1}</span>
              <Tick />
            </FileRow>
          ))}
        </FileList>
        <ScrollTrack $w={12} $top={21} $h={91}><Icon name="tree" size={9} /></ScrollTrack>
      </FileArea>
      <FootBar>
        <Icon name="stack" /><Icon name="folder" size={10} /><Icon name="comp" />
        <span>8 bpc</span><Icon name="trash" size={8} /><i />
      </FootBar>
    </Panel>
  );
}

function Effects() {
  return (
    <Panel>
      <PanelHead $pad={5}>
        <Icon name="close" size={5} color="#777" /><Swatch $c="#a9a4c4" /><Icon name="lock" size={7} />
        <h2>Effect Controls <Blue>(none)</Blue></h2>
        <MenuIcon />
      </PanelHead>
      <SubBar />
    </Panel>
  );
}

function Composition() {
  return (
    <Panel>
      <CompTabs>
        <button>Layer (none)</button>
        <ActiveTab $gap={5}>
          <Icon name="close" size={5} color="#999" /><Swatch /><Icon name="lock" size={7} />
          <h2>Composition <Blue>Call_out_1</Blue></h2>
          <MenuIcon />
        </ActiveTab>
      </CompTabs>
      <Crumbs>
        <a href="#render">Render my</a>
        <Icon name="back" size={6} color="#9a9a9a" />
        <Current>
          <a href="#comp"><Blue>Call_out_1</Blue></a>
          <Icon name="back" size={6} color="#4a4a4a" />
        </Current>
        <a href="#footage">Footage_Call_out_1</a>
      </Crumbs>
      <Viewer>
        <svg width="11" height="11"><path d="M0 8.5H11M7.5 0V11M0 10.5H11M10.5 0V11" stroke="#8a8a8a" strokeWidth="1" /></svg>
        <TopRuler />
        <SideRuler />
        <Stage>
          <p>Display Acceleration Disabled</p>
          <Artwork />
        </Stage>
      </Viewer>
      <CompFoot>
        <IconButton aria-label="preview" $w={11}><Icon name="layersMini" /></IconButton>
        <IconButton aria-label="monitor"><Icon name="monitor" size={9} /></IconButton>
        <Select label="Magnification" value="100%" w={44} />
        <IconButton aria-label="guides" $w={15}><Icon name="safe" /></IconButton>
        <IconButton aria-label="mask" $w={16}><Icon name="mask" /></IconButton>
        <Code>0;00;02;05</Code>
        <IconButton aria-label="snapshot" $w={15}><Icon name="snapshot" /></IconButton>
        <IconButton aria-label="show snapshot" $w={14}><Icon name="show" color="#3a3a3a" /></IconButton>
        <IconButton aria-label="channels" $w={17}><Icon name="rgb" /></IconButton>
        <Select label="Resolution" value="Full" w={56} />
        <IconButton aria-label="region" $w={15}><Icon name="roi" /></IconButton>
        <IconButton aria-label="transparency" $w={15}><Icon name="grid" /></IconButton>
        <Select label="Camera" value="Active Camera" w={68} />
        <Spacer $w={5} />
        <Select label="Views" value="1 View" w={44} />
        <IconButton aria-label="aspect" $w={15}><Icon name="pixelAspect" size={9} /></IconButton>
        <IconButton aria-label="fast preview" $w={14}><Icon name="fast" size={9} /></IconButton>
        <IconButton aria-label="timeline" $w={15}><Icon name="chart" /></IconButton>
        <IconButton aria-label="flowchart" $w={14}><Icon name="tree" size={9} /></IconButton>
        <IconButton aria-label="exposure"><Icon name="exposure" size={9} /></IconButton>
        <Spacer $w={2} />
        <Blue>+0,0</Blue>
      </CompFoot>
    </Panel>
  );
}

function Value({ icon, num, unit, off }: { icon: string; num: string; unit?: string; off?: boolean }) {
  return (
    <>
      <Icon name={icon} size={11} />
      {off ? <Off>{num}</Off> : <span><Blue>{num}</Blue> {unit}</span>}
      <Icon name="triDown" size={5} color="#9a9a9a" />
    </>
  );
}

const SideHead = styled(PanelHead)`
  justify-content: space-between;
  padding: 0 14px 0 7px;
`;

const ParaHead = styled(SideHead)`
  padding-right: 6px;
`;

const SidePanel = styled(Panel)<{ $h?: number }>`
  flex: ${(p) => (p.$h ? `0 0 ${p.$h}px` : "1")};
`;

function SidePanels() {
  return (
    <Side>
      <SidePanel $h={93}>
        <SideHead><h2>Align</h2><MenuIcon /></SideHead>
        <Body>
          <AlignLine>Align Layers to:<Select label="Align to" value="Selection" w={71} dim /></AlignLine>
          <IconRow $h={16}>
            {["alignL", "alignC", "alignR", "alignT", "alignM", "alignB"].map((n) => (
              <IconButton key={n} aria-label={n}><Icon name={n} size={9} color={c.off} /></IconButton>
            ))}
          </IconRow>
          <AlignLine>Distribute Layers:</AlignLine>
          <IconRow $h={10}>
            {["distT", "distM", "distB", "distL", "distC", "distR"].map((n) => (
              <IconButton key={n} aria-label={n}><Icon name={n} size={9} color="#3c3c3c" /></IconButton>
            ))}
          </IconRow>
        </Body>
      </SidePanel>
      <SidePanel $h={37}>
        <WithScroll>
          <div>
            <ParaHead><h2>Paragraph</h2><MenuIcon /></ParaHead>
            <ParaRow>
              {["pLeft", "pCenter", "pRight"].map((n, i) => (
                <IconButton key={n} aria-label={n} $on={i === 0}><Icon name={n} color={i ? c.icon : c.blue} /></IconButton>
              ))}
              <span />
              {["pJustL", "pJustC", "pJustR"].map((n) => (
                <IconButton key={n} aria-label={n}><Icon name={n} /></IconButton>
              ))}
              <span />
              <IconButton aria-label="justify all" $w={16}><Icon name="pJust" /></IconButton>
            </ParaRow>
          </div>
          <ScrollTrack $w={8} $top={0} $h={17} />
        </WithScroll>
      </SidePanel>
      <SidePanel>
        <SideHead><h2>Character</h2><MenuIcon /></SideHead>
        <Body>
          <FontGrid>
            <Stack>
              <Select label="Font family" value="Times New Roman" w={78} />
              <Select label="Font style" value="Regular" w={78} />
            </Stack>
            <Stack>
              <Icon name="dropper" size={11} />
              <svg width="13" height="10"><path d="M.5 .5H12.5V9.5H.5Z" fill="#fff" stroke="#aaa" /><path d="M1 1H12V5H1Z" fill="#000" /></svg>
            </Stack>
            <ColorChips />
          </FontGrid>
          <CharRows>
            <CharRow><Value icon="tSize" num="36" unit="px" /><Value icon="leading" num="Auto" /></CharRow>
            <CharRow><Value icon="kern" num="Metrics" off /><Value icon="track" num="0" /></CharRow>
          </CharRows>
          <CharRows>
            <CharRow>
              <Icon name="strokeW" size={10} /><span>- px</span><Icon name="triDown" size={5} color="#9a9a9a" />
              <OrderCell><Select label="Stroke order" value="" w={74} /></OrderCell>
            </CharRow>
          </CharRows>
          <CharRows>
            <CharRow><Value icon="vScale" num="100" unit="%" /><Value icon="hScale" num="100" unit="%" /></CharRow>
            <CharRow><Value icon="shift" num="0" unit="px" /><Value icon="tsume" num="0" unit="%" /></CharRow>
          </CharRows>
          <StyleRow>
            {["bold", "italic", "caps", "smallCaps", "superT", "subT"].map((n) => (
              <IconButton key={n} aria-label={n} $w={18}><Icon name={n} size={n.includes("aps") ? 11 : 9} /></IconButton>
            ))}
          </StyleRow>
        </Body>
      </SidePanel>
    </Side>
  );
}

const before = ["* Animation Presets", "3D Channel", "Audio"];
const blurs = [
  "Bilateral Blur", "Box Blur", "Camera Lens Blur", "CC Cross Blur", "CC Radial Blur", "CC Radial Fast Blur",
  "CC Vector Blur", "Channel Blur", "Compound Blur", "Directional Blur", "Gaussian Blur", "Radial Blur",
  "Sharpen", "Smart Blur", "Unsharp Mask",
];
const after = [
  "Channel", "CINEMA 4D", "Color Correction", "Distort", "Expression Controls", "Generate", "Keying", "Matte",
  "Noise & Grain", "Obsolete", "Perspective", "Simulation",
];

const FxSearch = styled(SearchBox)`
  margin: 3px 5px 2px 3px;
  padding-left: 5px;
`;

const FxHead = styled(SideHead)`
  padding: 0 6px 0 8px;
`;

function Group({ name, open }: { name: string; open?: boolean }) {
  return <FxRow><Icon name={open ? "triDown" : "tri"} size={6} /><span>{name}</span></FxRow>;
}

function Presets() {
  return (
    <Panel>
      <WithScroll>
        <div>
          <FxHead><h2>Effects &amp; Presets</h2><MenuIcon /></FxHead>
          <FxSearch><Icon name="searchMenu" /><input aria-label="Search effects" /></FxSearch>
          <FxList>
            {before.map((n) => <Group key={n} name={n} />)}
            <Group name="Blur & Sharpen" open />
            {blurs.map((n) => (
              <FxRow key={n} $child $on={n === "Box Blur"}>
                <Icon name="fx" size={9} />
                {(n === "Gaussian Blur" || n === "Sharpen") && <Icon name="fxPlay" size={9} />}
                <span>{n}</span>
              </FxRow>
            ))}
            {after.map((n) => <Group key={n} name={n} />)}
          </FxList>
        </div>
        <ScrollTrack $w={9} $top={1} $h={226} />
      </WithScroll>
    </Panel>
  );
}

const cols = [13, 10, 10, 15, 33, 7, 13, 20, 176, 47, 14, 46, 80, 101];

function Layers() {
  const layers: [string, string][] = [["15", "[Text_Call_out_1]"], ["16", "[Footage_Call_out_1]"]];
  return (
    <LayerTable>
      <colgroup>{cols.map((w, i) => <col key={i} width={w} />)}</colgroup>
      <thead>
        <tr>
          <th><Icon name="eye" size={8} /></th>
          <th><Icon name="audio" size={8} /></th>
          <th><Icon name="solo" size={8} /></th>
          <th><Icon name="lock" size={8} /></th>
          <th>Keys</th>
          <th />
          <th><Icon name="tag" size={8} /></th>
          <th>&nbsp;#</th>
          <th>&nbsp;Layer Name</th>
          <th>Mode</th>
          <th>&nbsp;T</th>
          <th>TrkMat</th>
          <th>&nbsp;Parent</th>
          <th>
            <SwitchHead>
              {["shy", "sun", "quality", "fxItalic", "film", "blur", "adjust", "cube"].map((n) => (
                <Icon key={n} name={n} size={8} />
              ))}
            </SwitchHead>
          </th>
        </tr>
      </thead>
      <tbody>
        {layers.map(([num, name]) => (
          <tr key={num}>
            <td><Cell /></td>
            <td />
            <td />
            <td><Cell /></td>
            <td />
            <td><Icon name="tri" size={6} /></td>
            <td><Cell $c={num === "15" ? "#b59a82" : "#b3a27e"} /></td>
            <td><b>&nbsp;{num}</b></td>
            <td><Icon name="comp" size={10} /> <Icon name="hash" size={8} /><LayerName>{name}</LayerName></td>
            <td><Select label={`Mode ${num}`} value="Normal" w={44} /></td>
            <td>&nbsp;<Cell /></td>
            <td><Select label={`Matte ${num}`} value="None" w={42} /></td>
            <td>
              <ParentCell><Icon name="whip" size={9} /><Select label={`Parent ${num}`} value="None" w={61} /></ParentCell>
            </td>
            <td>
              <SwitchCell>
                <Icon name="shy" size={8} /><Icon name="best" size={8} /><div><Cell /><Cell /><Cell /></div>
              </SwitchCell>
            </td>
          </tr>
        ))}
      </tbody>
    </LayerTable>
  );
}

function TimePanel() {
  return (
    <Timeline>
      <TimeTabs>
        <button><Swatch />Color</button>
        <button><Swatch />Render my</button>
        <ActiveTab $gap={6}>
          <Icon name="close" size={5} color="#999" /><Swatch />
          <h2>Call_out_1</h2>
          <MenuIcon />
        </ActiveTab>
      </TimeTabs>
      <TimeBody>
        <div>
          <Controls>
            <Clock><b>0;00;02;05</b><small>00065 (29.97 fps)</small></Clock>
            <TimeSearch><Icon name="searchMenu" /><input aria-label="Search layers" /></TimeSearch>
            <IconButton aria-label="mini flowchart" $w={19}><Icon name="flow" size={11} /></IconButton>
            <IconButton aria-label="draft 3d" $w={26}><Icon name="draft3d" size={11} /></IconButton>
            <IconButton aria-label="hide shy" $w={18}><Icon name="shyOn" size={11} color={c.blue} /></IconButton>
            <IconButton aria-label="frame blending"><Icon name="frame" size={11} /></IconButton>
            <IconButton aria-label="motion blur"><Icon name="blur" size={11} /></IconButton>
            <IconButton aria-label="graph editor" $w={29}><Icon name="graph" size={11} /></IconButton>
          </Controls>
          <Layers />
        </div>
        <Tracks>
          <TrackMain>
            <NavBar><i /></NavBar>
            <TimeScale />
            <WorkArea />
            <CacheMarks />
            <LayerBar />
            <LayerBar />
            <Empty />
          </TrackMain>
          <Gutter>
            <Icon name="marker" size={9} />
            <Icon name="tree" size={7} />
          </Gutter>
          <Playhead>
            <svg width="9" height="9"><path d="M0.5 0.5H8.5V5L4.5 9L0.5 5Z" fill={c.blue} /></svg>
          </Playhead>
        </Tracks>
      </TimeBody>
      <TimeFoot>
        <IconButton aria-label="toggle switches" $w={9}><Icon name="toggleA" size={8} color={c.blue} /></IconButton>
        <IconButton aria-label="toggle modes" $w={9}><Icon name="toggleB" size={8} color={c.blue} /></IconButton>
        <IconButton aria-label="toggle in out" $w={9}><Icon name="toggleC" size={8} /></IconButton>
        <Zoomer>
          <Icon name="mount" size={8} />
          <input type="range" aria-label="Zoom" defaultValue={95} />
          <Icon name="mountBig" size={10} />
          <i />
        </Zoomer>
      </TimeFoot>
    </Timeline>
  );
}

export default function App() {
  return (
    <Screen>
      <Global />
      <MenuBar>
        {["File", "Edit", "Composition", "Layer", "Effect", "Animation", "View", "Window", "Help"].map((m) => (
          <a key={m} href={`#${m.toLowerCase()}`}>{m}</a>
        ))}
      </MenuBar>
      <Tools />
      <Work>
        <Project />
        <Effects />
        <Composition />
        <SidePanels />
        <Presets />
      </Work>
      <TimePanel />
    </Screen>
  );
}
